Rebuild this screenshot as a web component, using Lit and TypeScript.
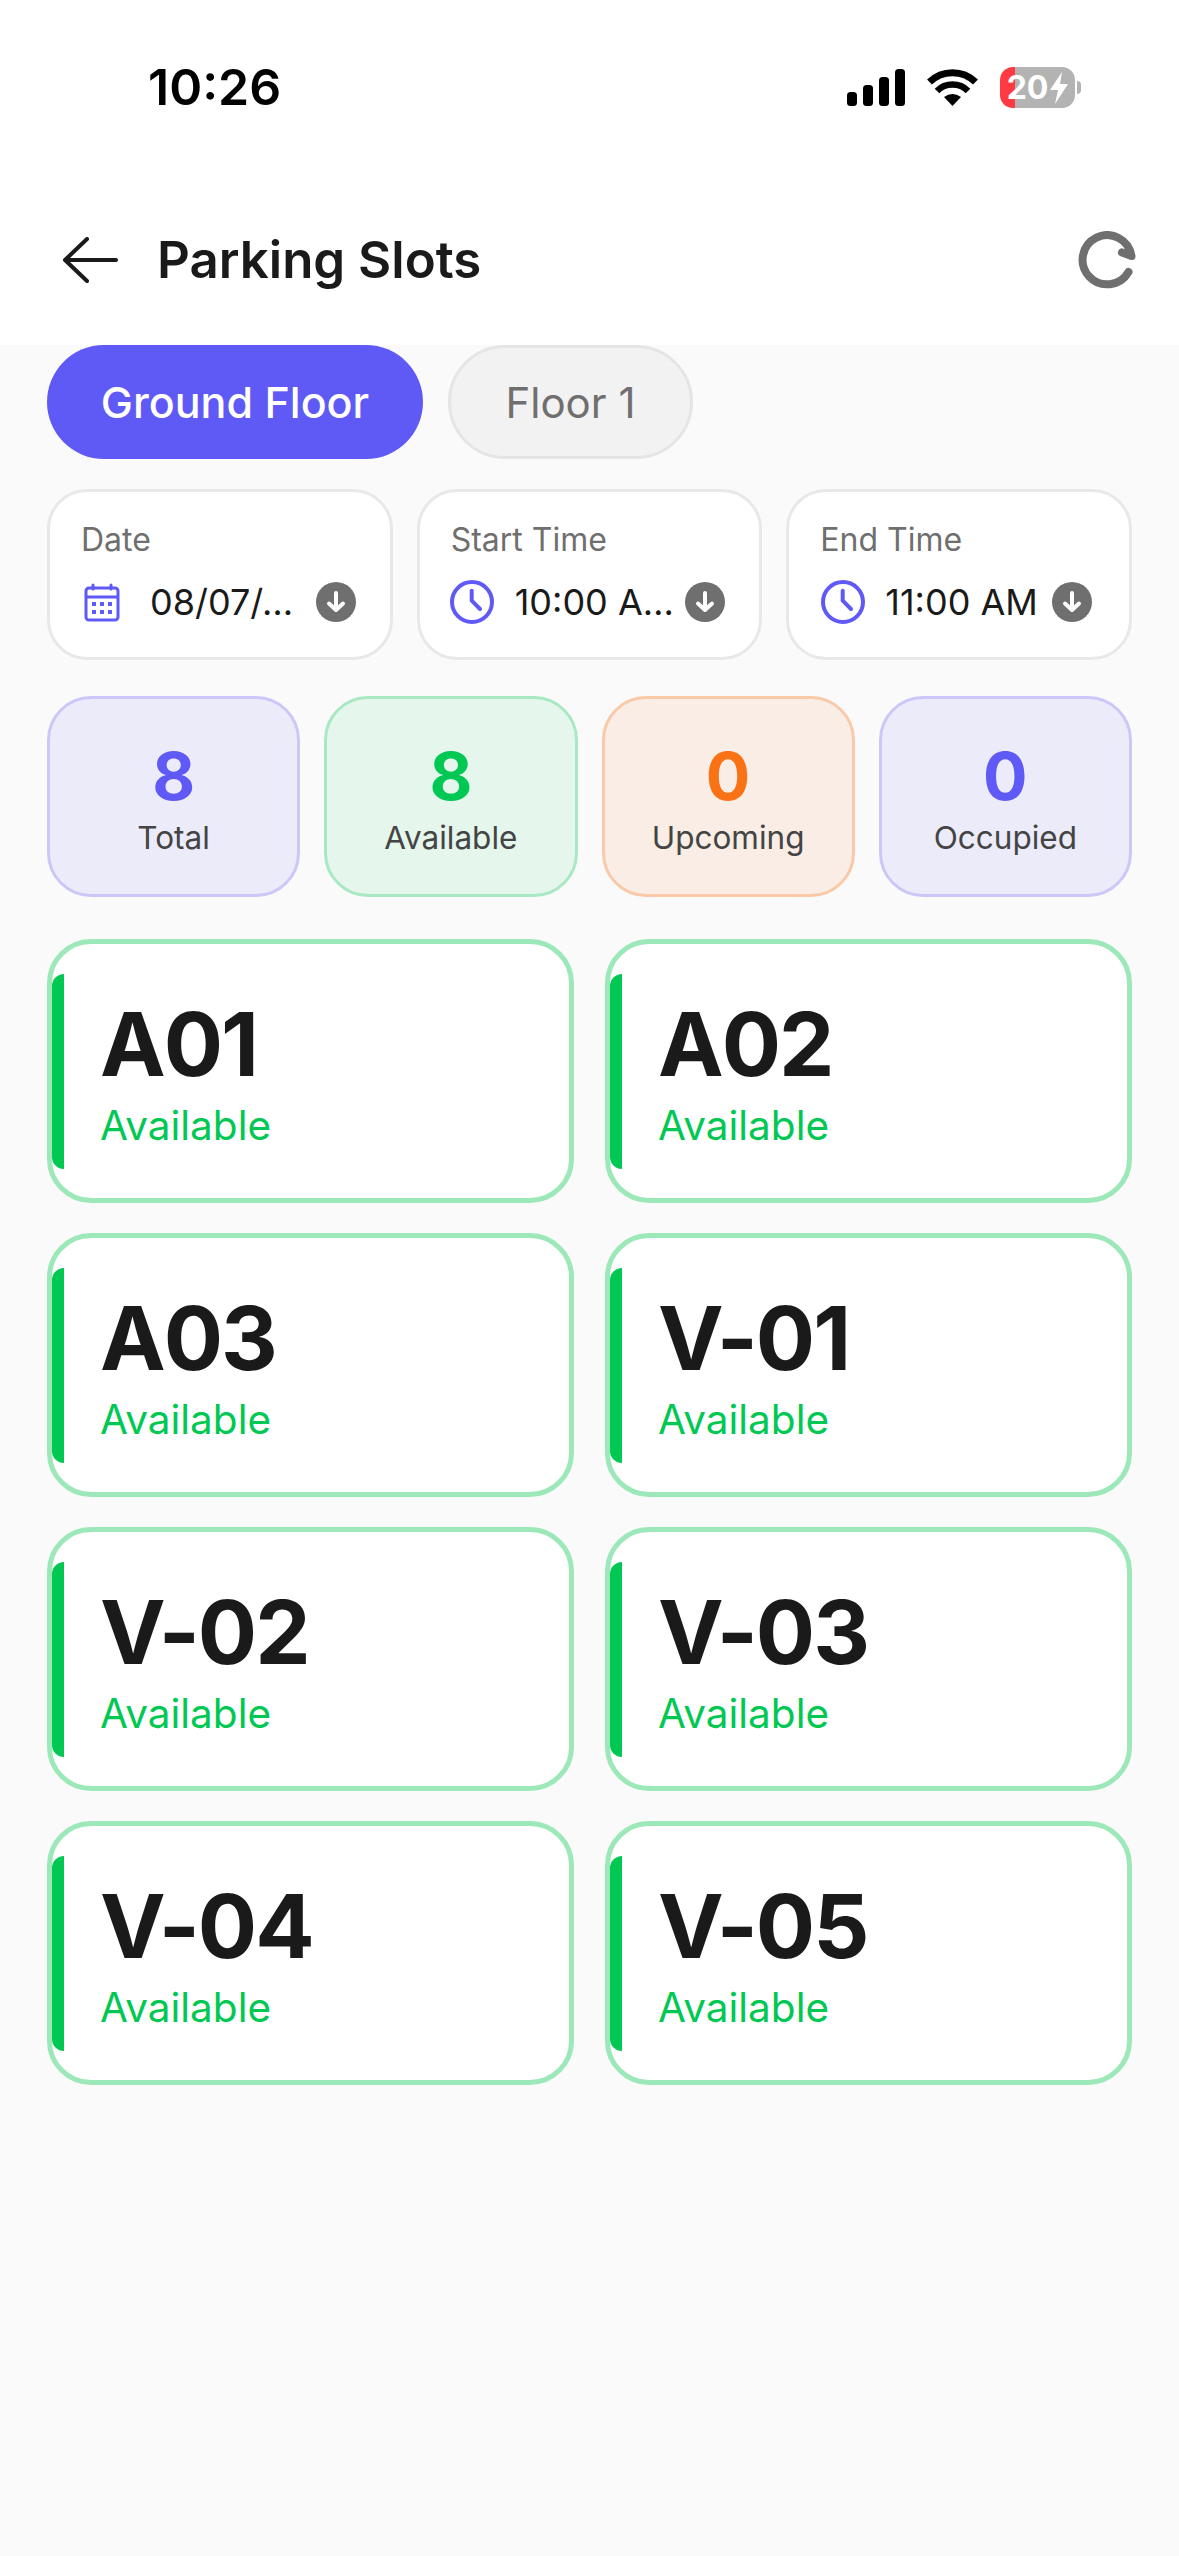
import {html, css, LitElement} from 'lit';
import {customElement} from 'lit/decorators.js';

const arrowDown = html`
  <svg class="down" viewBox="0 0 40 40">
    <circle cx="20" cy="20" r="20" fill="#6f6f6f"></circle>
    <path d="M20 11V28M13 21.5L20 28L27 21.5" fill="none" stroke="#fff" stroke-width="4" stroke-linecap="round" stroke-linejoin="round"></path>
  </svg>
`;

const clock = html`
  <svg class="lead" viewBox="0 0 44 44">
    <circle cx="22" cy="22" r="20" fill="none" stroke="#5f59f5" stroke-width="4"></circle>
    <path d="M21.7 10.7V20.7L30 29" fill="none" stroke="#5f59f5" stroke-width="4" stroke-linecap="round" stroke-linejoin="round"></path>
  </svg>
`;

const calendar = html`
  <svg class="lead" viewBox="0 0 44 44">
    <path d="M13 5V9M31 5V9" stroke="#5f59f5" stroke-width="3" stroke-linecap="round"></path>
    <rect x="6" y="8" width="32" height="32" rx="3" fill="none" stroke="#5f59f5" stroke-width="3"></rect>
    <path d="M6 17H38" stroke="#5f59f5" stroke-width="3"></path>
    <g fill="#5f59f5">
      <rect x="12" y="22" width="4" height="4"></rect><rect x="20" y="22" width="4" height="4"></rect><rect x="28" y="22" width="4" height="4"></rect>
      <rect x="12" y="30" width="4" height="4"></rect><rect x="20" y="30" width="4" height="4"></rect><rect x="28" y="30" width="4" height="4"></rect>
    </g>
  </svg>
`;

@customElement('app-root')
export class AppRoot extends LitElement {
  static styles = css`
    :host {
      display: block;
      min-height: 2556px;
      background: #fafafa;
      font-family: 'Inter', 'Noto Sans', sans-serif;
      color: #1a1a1a;
    }
    .top {
      background: #fff;
      height: 345px;
      display: flex;
      flex-direction: column;
    }
    .status {
      display: flex;
      align-items: center;
      height: 41px;
      margin-top: 67px;
      padding: 0 98px 0 148px;
    }
    .time {
      font-size: 50px;
      font-weight: 600;
      color: #000;
      line-height: 41px;
    }
    .signal {
      margin-left: auto;
      width: 58px;
      height: 37px;
    }
    .wifi {
      width: 51px;
      height: 37px;
      margin-left: 22px;
    }
    .battery {
      display: flex;
      align-items: center;
      margin-left: 22px;
    }
    .cell {
      width: 75px;
      height: 41px;
      border-radius: 13px;
      background: linear-gradient(90deg, #ff3b41 20%, #b3b3b3 20%);
      color: #fff;
      font-size: 32px;
      font-weight: 700;
      display: flex;
      align-items: center;
      justify-content: center;
      gap: 2px;
    }
    .bolt {
      width: 18px;
      height: 32px;
    }
    .nub {
      width: 4px;
      height: 13px;
      margin-left: 2px;
      background: #b3b3b3;
      border-radius: 0 6px 6px 0;
    }
    .bar {
      display: flex;
      align-items: center;
      margin-top: 122px;
      padding: 0 43px 0 62px;
    }
    .back {
      width: 56px;
      height: 46px;
    }
    .title {
      margin-left: 39px;
      font-size: 51px;
      font-weight: 600;
      line-height: 60px;
    }
    .refresh {
      margin-left: auto;
      width: 58px;
      height: 58px;
    }
    .body {
      padding: 0 47px;
    }
    .tabs {
      display: flex;
      gap: 25px;
    }
    .tab {
      height: 114px;
      box-sizing: border-box;
      border-radius: 57px;
      display: flex;
      align-items: center;
      justify-content: center;
      font-size: 43px;
      font-weight: 500;
    }
    .tab.on {
      width: 376px;
      background: #5f59f5;
      color: #fff;
    }
    .tab.off {
      width: 245px;
      background: #f2f2f2;
      border: 3px solid #e5e5e5;
      color: #6f6f6f;
      font-size: 42px;
      font-weight: 400;
    }
    .filters {
      display: grid;
      grid-template-columns: repeat(3, 1fr);
      gap: 24px;
      margin-top: 30px;
    }
    .filter {
      height: 171px;
      box-sizing: border-box;
      background: #fff;
      border: 3px solid #e8e8e8;
      border-radius: 40px;
      padding: 28px 34px 0 30px;
    }
    .filter label {
      display: block;
      margin-left: 1px;
      font-size: 32px;
      line-height: 40px;
      color: #6f6f6f;
    }
    .value {
      display: flex;
      align-items: center;
      margin-top: 20px;
      font-size: 36px;
      line-height: 44px;
    }
    .lead {
      width: 44px;
      height: 44px;
      flex: none;
      margin-right: 21px;
    }
    .filter.date .lead {
      margin-right: 26px;
    }
    .filter.end .value {
      padding: 0 3px 0 2px;
    }
    .filter.end .lead {
      margin-right: 20px;
    }
    .down {
      width: 40px;
      height: 40px;
      flex: none;
      margin-left: auto;
    }
    .stats {
      display: grid;
      grid-template-columns: repeat(4, 1fr);
      gap: 24px;
      margin-top: 36px;
    }
    .stat {
      height: 201px;
      box-sizing: border-box;
      border: 3px solid;
      border-radius: 44px;
      display: flex;
      flex-direction: column;
      align-items: center;
      padding-top: 42px;
    }
    .stat b {
      font-size: 66px;
      font-weight: 700;
      line-height: 70px;
    }
    .stat span {
      margin-top: 7px;
      font-size: 31.5px;
      line-height: 40px;
      color: #444;
    }
    .stat.violet { background: #ecebfa; border-color: #cbc7f8; }
    .stat.violet b { color: #5f59f5; }
    .stat.green { background: #e5f6ec; border-color: #a8e8c2; }
    .stat.green b { color: #00c853; }
    .stat.orange { background: #f9ede6; border-color: #f9c9a8; }
    .stat.orange b { color: #f97316; }
    .slots {
      display: grid;
      grid-template-columns: repeat(2, 1fr);
      gap: 30px 31px;
      margin-top: 42px;
    }
    .slot {
      height: 264px;
      box-sizing: border-box;
      background: #fff;
      border: 5px solid #9ce8b8;
      border-radius: 44px;
      display: flex;
      align-items: center;
    }
    .edge {
      width: 12px;
      height: 195px;
      background: #00c853;
      border-radius: 12px 0 0 12px;
    }
    .info {
      margin-left: 36px;
      padding-top: 6px;
    }
    .info b {
      display: block;
      font-size: 88px;
      font-weight: 700;
      line-height: 96px;
      letter-spacing: -2px;
      margin-top: -3px;
    }
    .info span {
      display: block;
      font-size: 40.5px;
      line-height: 48px;
      margin-top: 10px;
      color: #00c853;
    }
  `;

  stats = [
    {n: 8, label: 'Total', tone: 'violet'},
    {n: 8, label: 'Available', tone: 'green'},
    {n: 0, label: 'Upcoming', tone: 'orange'},
    {n: 0, label: 'Occupied', tone: 'violet'}
  ];
  slots = ['A01', 'A02', 'A03', 'V-01', 'V-02', 'V-03', 'V-04', 'V-05'];

  render() {
    return html`
      <div class="top">
        <div class="status">
          <span class="time">10:26</span>
          <svg class="signal" viewBox="0 0 58 37">
            <rect x="0" y="23" width="10" height="14" rx="3.5"></rect>
            <rect x="16" y="16" width="10" height="21" rx="3.5"></rect>
            <rect x="32" y="8" width="10" height="29" rx="3.5"></rect>
            <rect x="48" y="0" width="10" height="37" rx="3.5"></rect>
          </svg>
          <svg class="wifi" viewBox="0 0 51 37">
            <path d="M2.5 13A33 33 0 0 1 48.5 13" fill="none" stroke="#000" stroke-width="7"></path>
            <path d="M10 22A22 22 0 0 1 41 22" fill="none" stroke="#000" stroke-width="6.5"></path>
            <path d="M25.5 37L17 28Q25.5 22 34 28Z"></path>
          </svg>
          <div class="battery">
            <div class="cell">
              <span>20</span>
              <svg class="bolt" viewBox="0 0 18 32"><path d="M12 0L0 18H8L5 32L18 12H10Z" fill="#fff"></path></svg>
            </div>
            <i class="nub"></i>
          </div>
        </div>
        <div class="bar">
          <svg class="back" viewBox="0 0 56 46">
            <path d="M54 23H4M25 2L3 23L25 44" fill="none" stroke="#1a1a1a" stroke-width="4" stroke-linecap="round" stroke-linejoin="round"></path>
          </svg>
          <span class="title">Parking Slots</span>
          <svg class="refresh" viewBox="0 0 58 58">
            <path d="M50.5 41A24.6 24.6 0 1 1 53.5 25L44 21.5" fill="none" stroke="#6f6f6f" stroke-width="8" stroke-linecap="round" stroke-linejoin="round"></path>
          </svg>
        </div>
      </div>
      <div class="body">
        <div class="tabs">
          <div class="tab on">Ground Floor</div>
          <div class="tab off">Floor 1</div>
        </div>
        <div class="filters">
          <div class="filter date">
            <label>Date</label>
            <div class="value">${calendar}<span>08/07/…</span>${arrowDown}</div>
          </div>
          <div class="filter start">
            <label>Start Time</label>
            <div class="value">${clock}<span>10:00 A…</span>${arrowDown}</div>
          </div>
          <div class="filter end">
            <label>End Time</label>
            <div class="value">${clock}<span>11:00 AM</span>${arrowDown}</div>
          </div>
        </div>
        <div class="stats">
          ${this.stats.map((s) => html`
            <div class="stat ${s.tone}"><b>${s.n}</b><span>${s.label}</span></div>
          `)}
        </div>
        <div class="slots">
          ${this.slots.map((name) => html`
            <div class="slot">
              <i class="edge"></i>
              <div class="info"><b>${name}</b><span>Available</span></div>
            </div>
          `)}
        </div>
      </div>
    `;
  }
}
